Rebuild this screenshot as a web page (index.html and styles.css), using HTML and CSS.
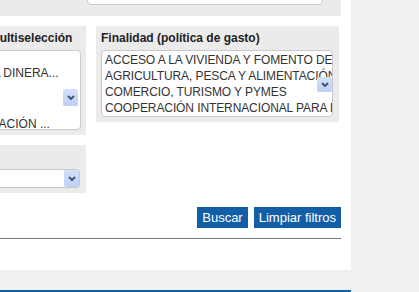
FILE: index.html
```html
<!DOCTYPE html>
<html lang="es">
<head>
    <meta charset="UTF-8">
    <meta name="viewport" content="width=device-width, initial-scale=1.0">
    <title>Buscador de convocatorias</title>
    <link rel="stylesheet" href="styles.css">
</head>
<body>
    <div class="page">
        <main class="main">
            <form class="content">
                <div class="panel panel-top">
                    <label class="inline-label">Órgano convocante</label>
                    <div class="text-input"></div>
                </div>

                <div class="filters">
                    <div class="column">
                        <div class="panel">
                            <div class="label">Instrumentos de ayuda – Multiselección</div>
                            <div class="listbox listbox-left">
                                <div class="spacer"></div>
                                <div class="option">SUBVENCIÓN Y ENTREGA DINERA...</div>
                                <div class="option">AVAL</div>
                                <div class="option">OTROS</div>
                                <div class="option">APORTACIÓN DE FINANCIACIÓN ...</div>
                                <span class="arrow arrow-list-left"><svg width="8" height="5" viewBox="0 0 8 5"><polyline points="1,1 4,4 7,1"/></svg></span>
                            </div>
                        </div>
                        <div class="panel">
                            <div class="label">Sector</div>
                            <div class="select">
                                <span class="arrow arrow-select"><svg width="8" height="5" viewBox="0 0 8 5"><polyline points="1,1 4,4 7,1"/></svg></span>
                            </div>
                        </div>
                    </div>

                    <div class="column">
                        <div class="panel panel-right">
                            <div class="label">Finalidad (política de gasto)</div>
                            <div class="listbox listbox-right">
                                <div class="option">ACCESO A LA VIVIENDA Y FOMENTO DE LA EDIFICACIÓN</div>
                                <div class="option">AGRICULTURA, PESCA Y ALIMENTACIÓN</div>
                                <div class="option">COMERCIO, TURISMO Y PYMES</div>
                                <div class="option">COOPERACIÓN INTERNACIONAL PARA EL DESARROLLO</div>
                                <span class="arrow arrow-list-right"><svg width="8" height="5" viewBox="0 0 8 5"><polyline points="1,1 4,4 7,1"/></svg></span>
                            </div>
                        </div>
                    </div>
                </div>

                <div class="actions">
                    <button type="button" class="btn">Buscar</button>
                    <button type="button" class="btn">Limpiar filtros</button>
                </div>
                <div class="divider"></div>
            </form>
        </main>
        <footer class="footer"></footer>
    </div>
</body>
</html>
```

FILE: styles.css
```css
* {
    margin: 0;
    padding: 0;
    box-sizing: border-box;
}

body {
    background-color: #f0f0f0;
    font-family: "Liberation Sans", Arial, sans-serif;
    font-size: 12px;
    color: #333;
}

.page {
    width: 351px;
}

.main {
    background-color: #fff;
    height: 270px;
    overflow: hidden;
}

/* the view is scrolled: the form starts above and left of the window */
.content {
    width: 501px;
    margin-left: -160px;
    margin-top: -20px;
}

.panel {
    background-color: #ebebeb;
    padding: 5px;
}

.panel-top {
    display: flex;
    align-items: flex-start;
    height: 36px;
    padding: 1px 5px 0;
    margin-bottom: 10px;
}

.inline-label {
    width: 242px;
    font-weight: bold;
    line-height: 24px;
}

.text-input {
    width: 236px;
    height: 24px;
    background-color: #fff;
    border: 1px solid #c9c9c9;
    border-radius: 4px;
}

.filters {
    display: grid;
    grid-template-columns: 246px 243px;
    column-gap: 10px;
    align-items: start;
}

.column {
    display: flex;
    flex-direction: column;
    gap: 10px;
}

.panel-right {
    padding-right: 6px;
}

.label {
    font-weight: bold;
    line-height: 15px;
    margin-bottom: 4px;
    color: #222;
    white-space: nowrap;
}

.listbox {
    position: relative;
    background-color: #fff;
    border: 1px solid #c9c9c9;
    border-radius: 4px;
    padding: 1px 3px;
    overflow: hidden;
    white-space: nowrap;
}

.listbox-left {
    height: 80px;
    padding-top: 0;
}

.listbox-left .option {
    line-height: 17px;
}

.spacer {
    height: 14px;
}

.listbox-right {
    height: 67px;
    letter-spacing: -0.1px;
}

.option {
    line-height: 16px;
    color: #333;
}

.select {
    position: relative;
    height: 19px;
    margin-right: 1px;
    background-color: #fff;
    border: 1px solid #c9c9c9;
    border-radius: 3px;
}

.arrow {
    position: absolute;
    display: flex;
    align-items: center;
    justify-content: center;
    width: 15px;
    background: linear-gradient(#d3e0fb, #bccff6);
    border-radius: 2px;
}

.arrow svg polyline {
    fill: none;
    stroke: #44546f;
    stroke-width: 2;
}

.arrow-list-left {
    right: 2px;
    top: 38px;
    height: 17px;
}

.arrow-list-right {
    right: 0;
    top: 26px;
    height: 15px;
}

.arrow-select {
    right: 0;
    top: 0;
    height: 17px;
}

.actions {
    display: flex;
    justify-content: flex-end;
    gap: 6px;
    margin-top: 14px;
}

.btn {
    height: 21px;
    padding: 0 5px;
    background-color: #135fa7;
    color: #fff;
    font-family: "Liberation Sans", Arial, sans-serif;
    font-size: 13px;
    border: none;
    cursor: pointer;
}

.btn:hover {
    background-color: #1a6fc0;
}

.divider {
    margin-top: 10px;
    border-top: 1px solid #777;
}

.footer {
    margin-top: 20px;
    height: 10px;
    background-color: #135fa7;
}
```
